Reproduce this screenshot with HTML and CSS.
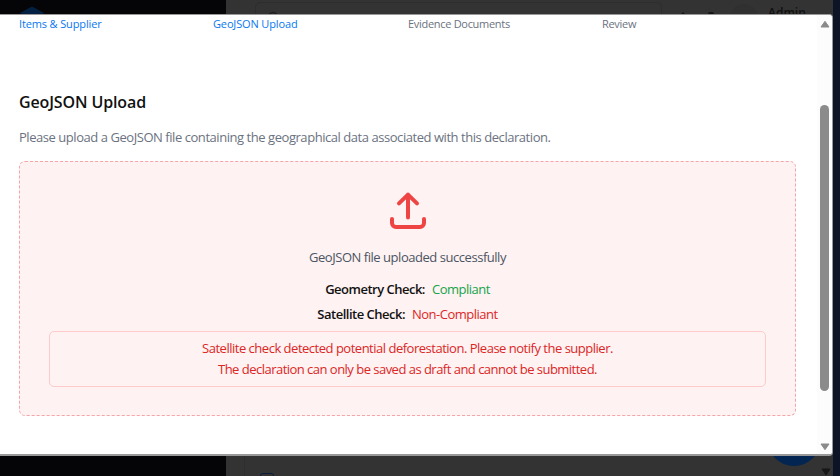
FILE: index.html
```html
<!DOCTYPE html>
<html lang="en">
<head>
<meta charset="utf-8">
<title>GeoJSON Upload</title>
<link rel="stylesheet" href="styles.css">
</head>
<body>
<div class="app">
  <aside class="sidebar">
    <svg class="brand" width="26" height="26" viewBox="0 0 26 26"><path d="M13 .5 25 7 13 13.5 1 7Z" fill="#022142"/></svg>
  </aside>
  <main class="page">
    <header class="topbar">
      <div class="search"><svg width="14" height="14" viewBox="0 0 14 14"><circle cx="6" cy="6" r="4.5" fill="none" stroke="#1e1e1e" stroke-width="1.5"/></svg></div>
      <div class="tools">
        <svg width="10" height="10" viewBox="0 0 10 10"><path d="M1 5 5 0 9 5Z" fill="#141414"/></svg>
        <svg width="10" height="10" viewBox="0 0 10 10"><rect x="2" width="6" height="6" rx="2" fill="#141414"/></svg>
      </div>
      <span class="avatar"></span>
      <span class="user">Admin</span>
    </header>
    <footer class="list"><span class="check"></span><span class="fab"></span><svg class="page-arrow" width="10" height="8" viewBox="0 0 10 8"><path d="M1 1h8L5 7Z" fill="#171717" stroke="#171717" stroke-linejoin="round"/></svg></footer>
  </main>
  <div class="edge"></div>
</div>
<section class="modal">
  <div class="content">
    <nav class="steps">
      <span class="step done">Items &amp; Supplier</span>
      <span class="step done">GeoJSON Upload</span>
      <span class="step">Evidence Documents</span>
      <span class="step">Review</span>
    </nav>
    <h1>GeoJSON Upload</h1>
    <p class="intro">Please upload a GeoJSON file containing the geographical data associated with this declaration.</p>
    <div class="dropzone">
      <svg class="upload" width="48" height="48" viewBox="0 0 24 24" fill="none" stroke="#ef4444" stroke-width="2" stroke-linecap="round" stroke-linejoin="round"><path d="M4 16v2a2 2 0 0 0 2 2h12a2 2 0 0 0 2-2v-2M16.5 8.2 12 3.8 7.5 8.2M12 3.8V15.3"/></svg>
      <p class="status">GeoJSON file uploaded successfully</p>
      <p class="result"><b>Geometry Check:</b><span class="ok">Compliant</span></p>
      <p class="result"><b>Satellite Check:</b><span class="bad">Non-Compliant</span></p>
      <div class="alert">
        <p class="line-a">Satellite check detected potential deforestation. Please notify the supplier.</p>
        <p class="line-b">The declaration can only be saved as draft and cannot be submitted.</p>
      </div>
    </div>
  </div>
  <div class="scrollbar">
    <svg width="10" height="8" viewBox="0 0 10 8"><path d="M5 1.3 9 7H1Z" fill="#8a8a8a" stroke="#8a8a8a" stroke-linejoin="round"/></svg>
    <div class="thumb"></div>
    <svg width="10" height="8" viewBox="0 0 10 8"><path d="M5 6.7 9 1H1Z" fill="#8a8a8a" stroke="#8a8a8a" stroke-linejoin="round"/></svg>
  </div>
</section>
</body>
</html>
```
FILE: styles.css
```css
* { box-sizing: border-box; }
body { margin: 0; width: 840px; height: 476px; overflow: hidden; position: relative; font-family: "Open Sans", "Noto Sans", sans-serif; font-size: 13px; }
p, h1 { margin: 0; white-space: nowrap; }
svg { display: block; flex: none; }
.app { display: flex; height: 476px; background: #333; }
.sidebar { width: 226px; background: #050507; padding: 6px 0 0 19px; }
.page { flex: 1; display: flex; flex-direction: column; justify-content: space-between; }
.edge { width: 7px; background: #0c1425; }
.topbar { display: flex; height: 40px; }
.search { width: 407px; height: 30px; margin: 2px 0 0 29px; border: 1px solid #2d2d2d; border-radius: 5px; padding: 8px 11px; }
.tools { display: flex; gap: 18px; padding: 12px 0 0 16px; }
.avatar { width: 26px; height: 26px; margin: 4px 0 0 15px; border-radius: 50%; background: #303030; }
.user { margin: 4px 0 0 11px; font-size: 12px; font-weight: 600; line-height: 17px; color: #101010; }
.list { display: flex; height: 22px; margin-left: 18px; border-left: 1px solid #2c2f2e; position: relative; }
.check { width: 14px; height: 14px; margin: 19px 0 0 15px; border: 1px solid #0b1d36; border-radius: 3px; }
.fab { position: absolute; left: 522px; bottom: 10px; width: 54px; height: 54px; border-radius: 50%; background: #022552; }
.page-arrow { position: absolute; left: 576px; top: 14px; }
.modal { position: absolute; left: -4px; top: 14px; width: 837px; height: 442px; display: flex; background: #fff; border: 1px solid #999; border-bottom-width: 2px; border-radius: 4px; overflow: hidden; }
.content { flex: 1; padding-left: 22px; }
.steps { display: grid; grid-template-columns: 194px 195px 194px 1fr; height: 18px; }
.step { font-size: 11px; line-height: 18px; color: #6b7280; white-space: nowrap; letter-spacing: -0.3px; }
.done { color: #0878f0; font-weight: 500; letter-spacing: -0.14px; }
h1 { margin-top: 58px; font-size: 16px; line-height: 22px; font-weight: 600; color: #111; letter-spacing: -0.13px; }
.intro { margin-top: 14px; line-height: 20px; color: #6b7280; letter-spacing: -0.45px; }
.dropzone { width: 777px; height: 255px; margin-top: 14px; padding: 25px 29px 0; border: 1px dashed #f3a5a8; border-radius: 6px; background: #fef2f2; text-align: center; }
.upload { margin: 0 auto; }
.status { margin-top: 12px; line-height: 20px; color: #4b5563; letter-spacing: -0.46px; }
.result { display: flex; justify-content: center; gap: 7px; line-height: 20px; margin-top: 5px; letter-spacing: -0.5px; }
.status + .result { margin-top: 12px; }
.result b { font-weight: 600; color: #111; }
.ok { color: #16a34a; }
.bad { color: #dc2626; }
.alert { height: 56px; margin-top: 7px; padding-top: 6px; border: 1px solid #fecaca; border-radius: 5px; color: #dc2626; line-height: 21px; }
.line-a { letter-spacing: -0.49px; }
.line-b { letter-spacing: -0.52px; }
.scrollbar { width: 15px; display: flex; flex-direction: column; align-items: center; padding: 5px 0 3px; background: #fcfcfc; }
.thumb { width: 9px; height: 286px; margin: 77px 0 52px; border-radius: 5px; background: #8b8b8b; }
```
